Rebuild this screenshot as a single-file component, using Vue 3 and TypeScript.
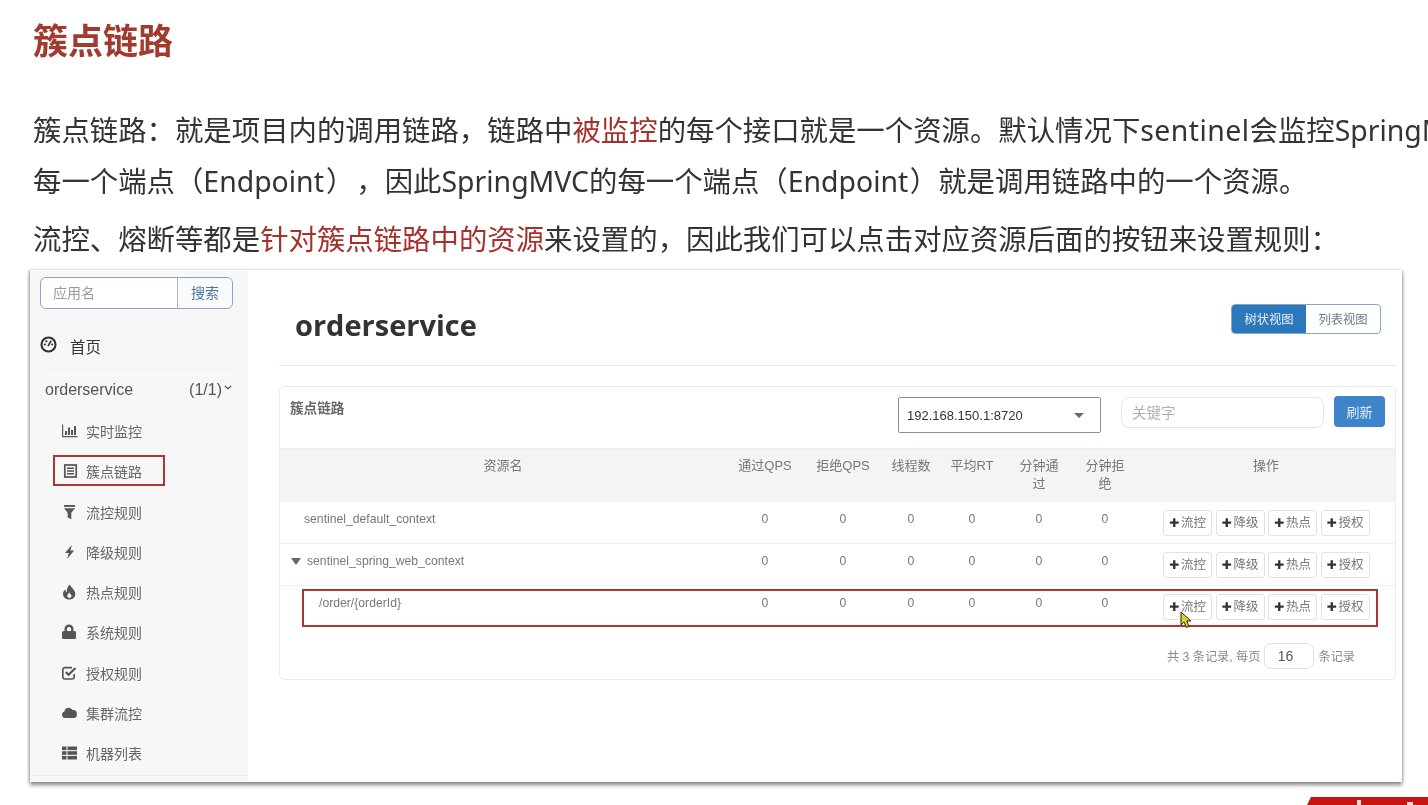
<script setup lang="ts">
type SideItem = { label: string; icon: string };
type Row = { name: string; kind: "plain" | "parent" | "child" };

const sideItems: SideItem[] = [
  { label: "实时监控", icon: "chart" },
  { label: "簇点链路", icon: "list" },
  { label: "流控规则", icon: "filter" },
  { label: "降级规则", icon: "bolt" },
  { label: "热点规则", icon: "fire" },
  { label: "系统规则", icon: "lock" },
  { label: "授权规则", icon: "check" },
  { label: "集群流控", icon: "cloud" },
  { label: "机器列表", icon: "table" },
];

const headers = ["资源名", "通过QPS", "拒绝QPS", "线程数", "平均RT", "分钟通过", "分钟拒绝", "操作"];
const rows: Row[] = [
  { name: "sentinel_default_context", kind: "plain" },
  { name: "sentinel_spring_web_context", kind: "parent" },
  { name: "/order/{orderId}", kind: "child" },
];
const actions = ["流控", "降级", "热点", "授权"];
</script>

<template>
  <div class="slide">
    <h1 class="title">簇点链路</h1>
    <p class="line first">簇点链路：就是项目内的调用链路，链路中<em>被监控</em>的每个接口就是一个资源。默认情况下<span class="wide">sentinel</span>会监控SpringMVC的</p>
    <p class="line second">每一个端点（Endpoint<span class="gap">）</span><span class="gap">，</span>因此SpringMVC的每一个端点（Endpoint<span class="gap small">）</span>就是调用链路中的一个资源。</p>
    <p class="line third">流控、熔断等都是<em>针对簇点链路中的资源</em>来设置的，因此我们可以点击对应资源后面的按钮来设置规则：</p>

    <div class="shot">
      <aside class="side">
        <div class="search">
          <span class="search-input">应用名</span>
          <span class="search-btn">搜索</span>
        </div>
        <div class="home">
          <svg viewBox="0 0 16 16" width="17" height="17">
            <circle cx="8" cy="8" r="6.6" fill="none" stroke="#333" stroke-width="2" />
            <circle cx="4.6" cy="8" r="1" fill="#333" />
            <circle cx="6" cy="5" r="1" fill="#333" />
            <circle cx="11.4" cy="8" r="1" fill="#333" />
            <path d="M7.5 9.5L10.5 4.5" stroke="#333" stroke-width="1.5" />
          </svg>
          <span>首页</span>
        </div>
        <div class="app">
          <span class="app-name">orderservice</span>
          <span class="app-count">(1/1)</span>
          <svg class="chev" viewBox="0 0 10 6" width="8" height="5">
            <path d="M1 1l4 3.4L9 1" fill="none" stroke="#444" stroke-width="1.5" />
          </svg>
        </div>
        <ul class="menu">
          <li v-for="item in sideItems" :key="item.label">
            <svg class="ico" viewBox="0 0 16 16" width="16" height="16">
              <g v-if="item.icon === 'chart'" fill="#555">
                <path d="M0 1.5h1.2V13H15.5v1.3H0z" />
                <rect x="3" y="8" width="2" height="4" />
                <rect x="6" y="4.5" width="2" height="7.5" />
                <rect x="9" y="7" width="2" height="5" />
                <rect x="12" y="3" width="2" height="9" />
              </g>
              <g v-else-if="item.icon === 'list'">
                <rect x="2.8" y="2" width="11.4" height="12" fill="none" stroke="#555" stroke-width="1.7" />
                <path d="M5 5.2h7M5 8h7M5 10.8h7" stroke="#555" stroke-width="1.4" />
              </g>
              <g v-else-if="item.icon === 'filter'" fill="#555">
                <rect x="2" y="1" width="11" height="1.9" />
                <path d="M2 4.2h11L9.3 8.8v6.4l-3.6-1.800V8.800z" />
              </g>
              <path v-else-if="item.icon === 'bolt'" fill="#555" d="M9.8 1L3 9h3.8L5 15l7.2-8.500H8.400z" />
              <path
                v-else-if="item.icon === 'fire'"
                fill="#555"
                fill-rule="evenodd"
                d="M7.8 .5c.6 3 5.500 4.800 5.500 9.500 0 3.300-2.500 5.500-5.900 5.500C3.900 15.500 1 13.400 1 10c0-2 .9-3.500 2.300-4.500.1 1.400.5 2.300 1.500 2.700C4.500 5.300 5.600 2.300 7.800.5zM7.300 8.500c-1 1.200-2 2.100-2 3.500 0 1.100.9 2 2.100 2s2.100-.9 2.100-2c0-1.400-1.400-2.200-2.200-3.500z"
              />
              <path
                v-else-if="item.icon === 'lock'"
                fill="#555"
                fill-rule="evenodd"
                d="M2.500 7V5a4.500 4.500 0 0 1 9 0v2h1A1.500 1.500 0 0 1 14 8.500v5a1.500 1.500 0 0 1-1.500 1.500h-11A1.500 1.500 0 0 1 0 13.500v-5A1.500 1.500 0 0 1 1.500 7zm2.400 0h4.200V5a2.100 2.100 0 0 0-4.200 0z"
              />
              <g v-else-if="item.icon === 'check'" fill="none" stroke="#555">
                <path d="M12.2 9v2.800a2.200 2.200 0 0 1-2.200 2.200H3a2.200 2.200 0 0 1-2.200-2.200V4.800A2.200 2.200 0 0 1 3 2.600h7" stroke-width="1.7" />
                <path d="M3.800 7l2.800 2.800L13.500 3" stroke-width="2.2" />
              </g>
              <path
                v-else-if="item.icon === 'cloud'"
                fill="#555"
                d="M3.500 13A3.500 3.500 0 0 1 0 9.500a3.300 3.300 0 0 1 2.400-3.100A4.300 4.300 0 0 1 6.700 2.800c1.700 0 3 .9 3.700 2.300.4-.1.700-.2 1-.2A3.300 3.300 0 0 1 14.700 9 3 3 0 0 1 12 13z"
              />
              <g v-else fill="#555">
                <rect x="0" y="1.5" width="4.5" height="3.6" />
                <rect x="5.5" y="1.5" width="9.5" height="3.6" />
                <rect x="0" y="6.2" width="4.5" height="3.6" />
                <rect x="5.5" y="6.2" width="9.5" height="3.6" />
                <rect x="0" y="10.9" width="4.5" height="3.6" />
                <rect x="5.5" y="10.9" width="9.5" height="3.6" />
              </g>
            </svg>
            <span>{{ item.label }}</span>
          </li>
        </ul>
        <div class="side-end"></div>
        <span class="mark-side"></span>
      </aside>

      <main class="content">
        <div class="head">
          <h2>orderservice</h2>
          <div class="tabs">
            <span class="tab on">树状视图</span>
            <span class="tab">列表视图</span>
          </div>
        </div>

        <section class="card">
          <div class="card-top">
            <span class="card-title">簇点链路</span>
            <div class="select">
              <span>192.168.150.1:8720</span>
              <i class="caret"></i>
            </div>
            <div class="keyword">关键字</div>
            <span class="refresh">刷新</span>
          </div>

          <div class="grid thead">
            <div v-for="h in headers" :key="h" class="cell">{{ h }}</div>
          </div>
          <div v-for="r in rows" :key="r.name" class="grid trow" :class="'row-' + r.kind">
            <div class="cell name" :class="r.kind">
              <i v-if="r.kind === 'parent'" class="tree"></i>{{ r.name }}
            </div>
            <div v-for="n in 6" :key="n" class="cell">0</div>
            <div class="cell ops">
              <span v-for="a in actions" :key="a" class="op"><b>✚</b>{{ a }}</span>
            </div>
          </div>

          <div class="pager">
            <span>共 3 条记录, 每页</span>
            <span class="size">16</span>
            <span>条记录</span>
          </div>
        </section>
      </main>

      <span class="mark-row"></span>
      <svg class="cursor" viewBox="0 0 14 18" width="14" height="18">
        <path d="M1 1v13l3-3 2.500 5.500 2.500-1L6.800 10H11z" fill="#d8d820" stroke="#222" stroke-width="1" />
      </svg>
    </div>

    <div class="corner"><i></i><i></i></div>
  </div>
</template>

<style>
html,
body {
  margin: 0;
  background: #fff;
}
</style>

<style scoped>
.slide {
  position: relative;
  width: 1428px;
  height: 805px;
  overflow: hidden;
  background: #fff;
  font-family: "Noto Sans CJK SC", "Noto Sans", sans-serif;
  color: #333;
  text-spacing-trim: space-all;
  filter: blur(0.45px);
}
.title {
  margin: 0;
  padding: 14px 0 2px 33px;
  font-size: 35px;
  line-height: 50px;
  font-weight: 700;
  color: #a33a30;
}
.line {
  margin: 0;
  padding-left: 33px;
  font-size: 28.4px;
  line-height: 50px;
  white-space: nowrap;
  font-family: "Noto Sans", "Noto Sans CJK SC", sans-serif;
}
.first {
  margin-top: 39px;
}
.second {
  margin-top: 1px;
}
.third {
  margin-top: 8px;
}
.line em {
  font-style: normal;
  color: #a8302c;
}
.wide {
  letter-spacing: 0.45px;
}
.gap {
  margin-left: 2px;
}
.gap.small {
  margin-left: 1.5px;
}
.shot {
  position: absolute;
  left: 30px;
  top: 270px;
  width: 1372px;
  height: 512px;
  display: flex;
  background: #fff;
  box-shadow: 0 3px 4px #888, 1px 0 2px #d8d8d8, -1px 0 2px #c4c4c4;
  font-family: "Liberation Sans", "Noto Sans CJK SC", sans-serif;
}
.side {
  position: relative;
  width: 218px;
  flex: none;
  background: #f7f7f8;
  padding: 7px 0 0;
  box-sizing: border-box;
  color: #555;
}
.search {
  display: flex;
  margin-left: 10px;
  width: 193px;
  height: 32px;
  box-sizing: border-box;
  border: 1px solid #8ba3bd;
  border-radius: 6px;
  background: #fff;
  font-size: 14px;
  line-height: 30px;
}
.search-input {
  flex: 1;
  padding-left: 12px;
  color: #9a9a9a;
}
.search-btn {
  width: 54px;
  text-align: center;
  border-left: 1px solid #a9b6c4;
  color: #4a76a4;
  background: #f9fafb;
  border-radius: 0 6px 6px 0;
}
.home {
  display: flex;
  align-items: center;
  height: 24px;
  margin-top: 25px;
  padding-left: 10px;
  font-size: 15.5px;
  color: #333;
}
.home svg {
  margin-top: -4px;
}
.home span {
  margin-left: 13px;
}
.app {
  display: flex;
  align-items: center;
  height: 22px;
  margin: 10px 16px 0 15px;
  padding-top: 10px;
  border-top: 1px solid #f0f0f1;
  font-size: 16px;
  color: #555;
}
.app-name {
  flex: 1;
}
.chev {
  margin: 0 0 6px 2px;
}
.menu {
  list-style: none;
  margin: 10px 0 0;
  padding: 0 0 0 32px;
}
.menu li {
  display: flex;
  align-items: center;
  height: 40.25px;
  font-size: 14px;
  color: #666;
}
.ico {
  flex: none;
}
.menu span {
  margin-left: 8px;
}
.side-end {
  margin-top: 2px;
  border-top: 1px solid #ececec;
}
.mark-side {
  position: absolute;
  left: 23px;
  top: 185px;
  width: 112px;
  height: 31px;
  box-sizing: border-box;
  border: 2px solid #ad3533;
}
.content {
  flex: 1;
  min-width: 0;
  padding: 0 6px 0 31px;
}
.head {
  display: flex;
  justify-content: space-between;
  height: 96px;
  padding: 34px 15px 0 16px;
  box-sizing: border-box;
  border-bottom: 1px solid #e6e6e6;
}
.head h2 {
  margin: 0;
  font-family: "Open Sans", "Liberation Sans", sans-serif;
  font-size: 29px;
  font-weight: 700;
  line-height: 42px;
  color: #333;
}
.tabs {
  display: flex;
  height: 30px;
  box-sizing: border-box;
  border: 1px solid #88a7c8;
  border-radius: 4px;
  overflow: hidden;
  font-size: 12.3px;
  line-height: 28px;
}
.tab {
  width: 74px;
  text-align: center;
  color: #66788c;
  font-family: "Noto Sans CJK SC", sans-serif;
}
.tab.on {
  background: #2b78ba;
  color: #e6f0f8;
}
.card {
  margin-top: 20px;
  height: 294px;
  box-sizing: border-box;
  border: 1px solid #ececec;
  border-radius: 5px;
  background: #fff;
}
.card-top {
  position: relative;
  display: flex;
  align-items: flex-start;
  height: 61px;
  padding: 9px 10px 0 10px;
  box-sizing: border-box;
  font-family: "Noto Sans CJK SC", sans-serif;
}
.card-title {
  width: 608px;
  font-size: 13.6px;
  font-weight: 700;
  line-height: 22px;
  color: #666;
  flex: none;
}
.select {
  display: flex;
  align-items: center;
  justify-content: space-between;
  width: 203px;
  height: 36px;
  margin-top: 1px;
  padding: 0 16px 0 8px;
  box-sizing: border-box;
  border: 1px solid #7e93a8;
  border-radius: 2px;
  font-family: "Liberation Sans", sans-serif;
  font-size: 13px;
  color: #333;
}
.caret {
  width: 0;
  height: 0;
  border-left: 5px solid transparent;
  border-right: 5px solid transparent;
  border-top: 5px solid #666;
}
.keyword {
  width: 203px;
  height: 31px;
  margin: 1px 0 0 20px;
  padding-left: 10px;
  box-sizing: border-box;
  border: 1px solid #e3e6ea;
  border-radius: 8px;
  font-size: 14.5px;
  line-height: 27px;
  color: #b0b0b0;
}
.refresh {
  width: 51px;
  height: 31px;
  margin-left: 10px;
  border-radius: 4px;
  background: #3d85c8;
  color: #e6f0f8;
  font-size: 13px;
  line-height: 31px;
  text-align: center;
}
.grid {
  display: grid;
  grid-template-columns: 446px 78px 78px 58px 64px 70px 62px 260px;
  font-family: "Liberation Sans", "Noto Sans CJK SC", sans-serif;
}
.thead {
  height: 54px;
  background: #f3f4f6;
  border-top: 1px solid #eceef0;
  border-bottom: 1px solid #eceef0;
  box-sizing: border-box;
  color: #777;
  font-size: 13px;
  line-height: 18px;
}
.thead .cell {
  padding: 8px 8px 0;
  text-align: center;
}
.thead .cell:nth-child(6),
.thead .cell:nth-child(7) {
  padding-left: 11px;
  padding-right: 11px;
}
.trow {
  height: 42px;
  border-bottom: 1px solid #eeeff1;
  box-sizing: border-box;
  color: #777;
  font-size: 12.2px;
  line-height: 18px;
}
.row-child {
  border-bottom: 0;
}
.trow .cell {
  padding-top: 8px;
  text-align: center;
}
.trow .name {
  text-align: left;
}
.name.plain {
  padding-left: 24px;
}
.name.parent {
  padding-left: 11px;
}
.name.child {
  padding-left: 39px;
}
.tree {
  display: inline-block;
  width: 0;
  height: 0;
  margin-right: 6px;
  border-left: 5px solid transparent;
  border-right: 5px solid transparent;
  border-top: 7px solid #666;
}
.trow .ops {
  display: flex;
  gap: 3.5px;
  padding: 8px 0 0 27px;
}
.op {
  width: 49px;
  height: 26px;
  flex: none;
  box-sizing: border-box;
  border: 1px solid #e2e2e2;
  border-radius: 3px;
  background: #fff;
  font-size: 12.5px;
  line-height: 24px;
  text-align: center;
  color: #777;
  white-space: nowrap;
}
.op b {
  color: #333;
  font-size: 12px;
  margin-right: 2px;
  font-family: "DejaVu Sans", sans-serif;
}
.pager {
  display: flex;
  align-items: center;
  gap: 4px;
  padding: 15px 0 0 887px;
  font-size: 12.2px;
  color: #888;
}
.size {
  width: 50px;
  height: 26px;
  padding-right: 8px;
  box-sizing: border-box;
  border: 1px solid #e2e2e2;
  border-radius: 7px;
  text-align: center;
  line-height: 24px;
  color: #555;
  font-size: 14px;
}
.mark-row {
  position: absolute;
  left: 272px;
  top: 319px;
  width: 1076px;
  height: 38px;
  box-sizing: border-box;
  border: 2px solid #ad3533;
}
.cursor {
  position: absolute;
  left: 1150px;
  top: 341px;
}
.corner {
  position: absolute;
  left: 1307px;
  top: 797px;
  width: 121px;
  height: 8px;
  background: #c8140f;
  clip-path: polygon(4px 0, 100% 0, 100% 100%, 0 100%);
}
.corner i {
  position: absolute;
  top: 3px;
  left: 50px;
  width: 4px;
  height: 5px;
  background: #f4dcd8;
}
.corner i + i {
  left: 100px;
  top: 5px;
  width: 6px;
  height: 3px;
}
</style>
